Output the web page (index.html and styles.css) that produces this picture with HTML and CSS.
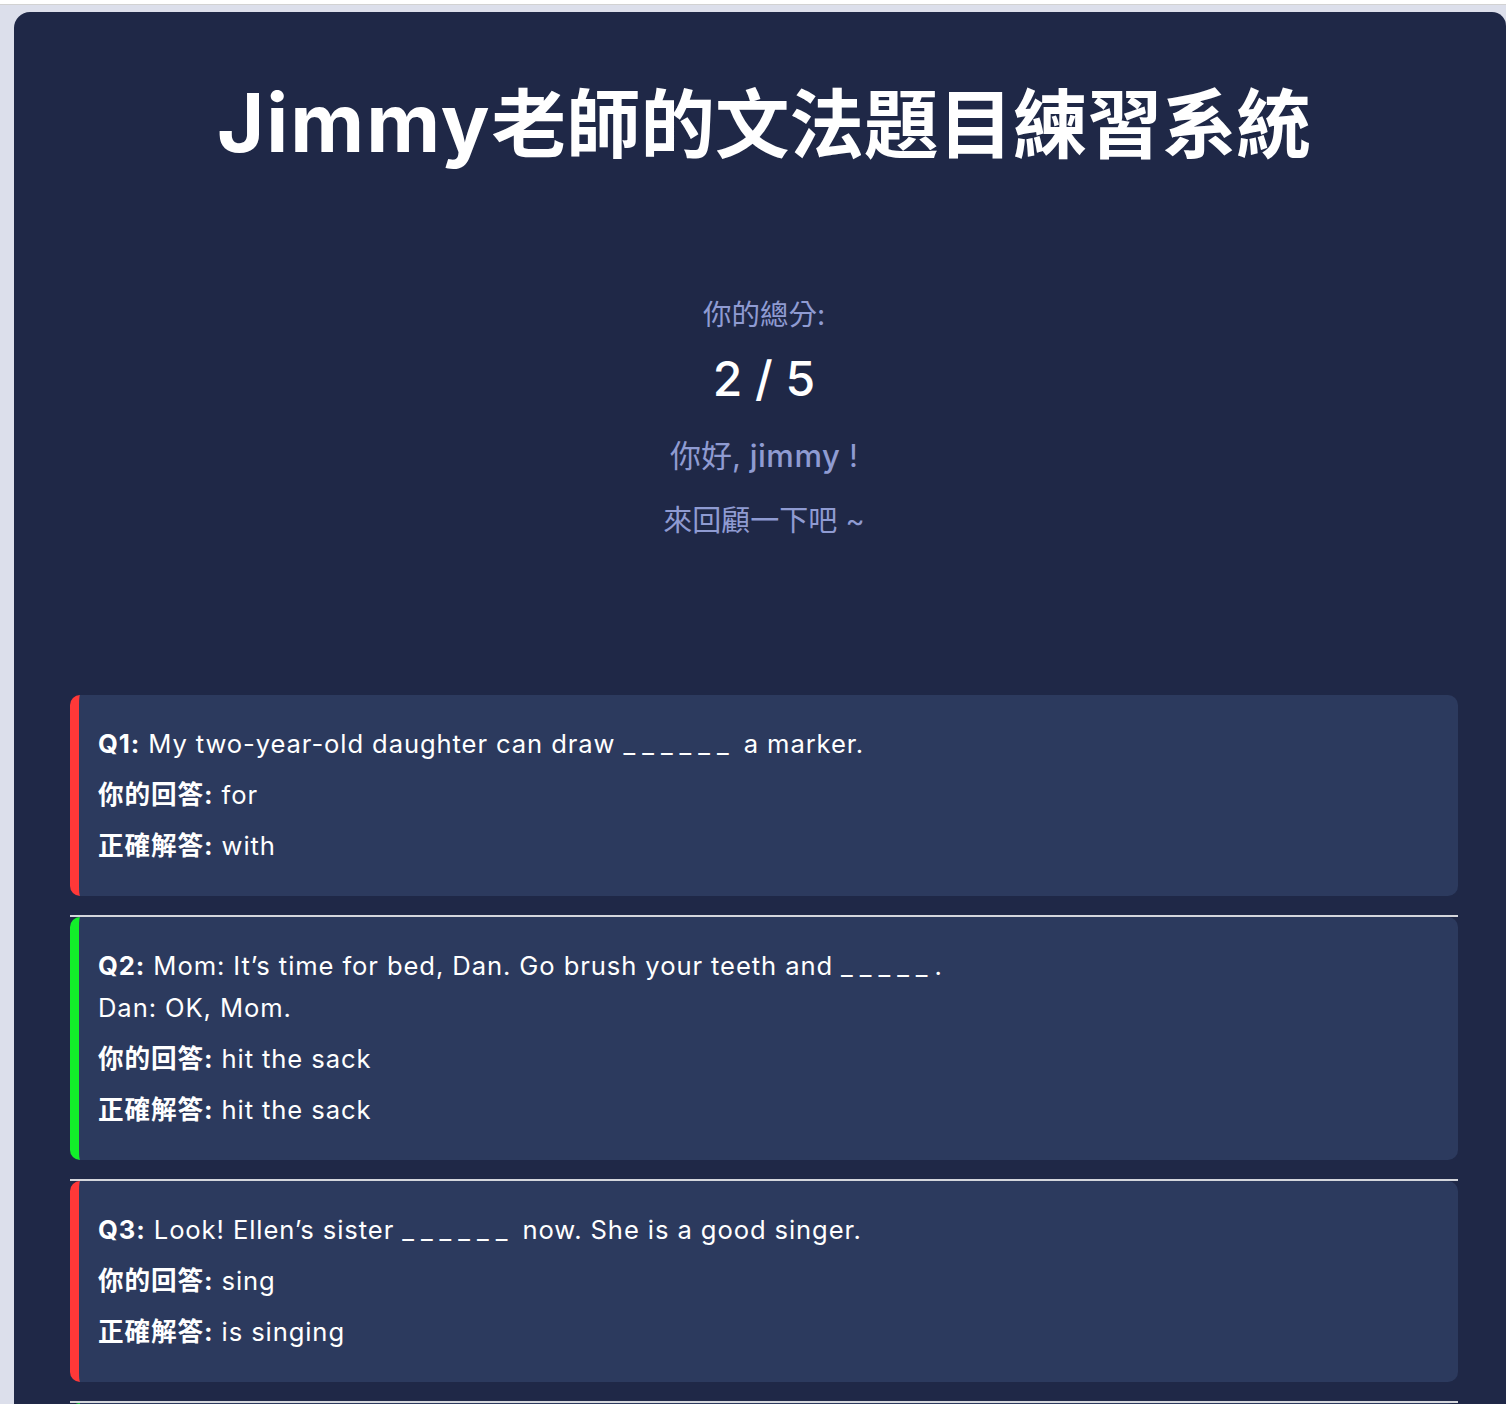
FILE: index.html
```html
<!DOCTYPE html>
<html lang="zh-Hant">
<head>
<meta charset="utf-8">
<title>Jimmy老師的文法題目練習系統</title>
<link rel="stylesheet" href="styles.css">
</head>
<body>
<div class="topbar"></div>
<main class="panel">
  <h1 class="title"><span class="latin">Jimmy</span>老師的文法題目練習系統</h1>
  <section class="summary">
    <p class="score-label">你的總分:</p>
    <p class="score">2 / 5</p>
    <p class="greet">你好, <span class="name">jimmy</span> !</p>
    <p class="review">來回顧一下吧 ~</p>
  </section>
  <section class="results">
    <div class="card wrong">
      <p><b>Q1:</b> My two-year-old daughter can draw <span class="blank">______</span> a marker.</p>
      <p><b>你的回答:</b> for</p>
      <p><b>正確解答:</b> with</p>
    </div>
    <hr class="sep">
    <div class="card right">
      <p><b>Q2:</b> Mom: It’s time for bed, Dan. Go brush your teeth and <span class="blank">_____</span>.<br>Dan: OK, Mom.</p>
      <p><b>你的回答:</b> hit the sack</p>
      <p><b>正確解答:</b> hit the sack</p>
    </div>
    <hr class="sep">
    <div class="card wrong">
      <p><b>Q3:</b> Look! Ellen’s sister <span class="blank">______</span> now. She is a good singer.</p>
      <p><b>你的回答:</b> sing</p>
      <p><b>正確解答:</b> is singing</p>
    </div>
    <hr class="sep">
    <div class="card right">
      <p><b>Q4:</b> Tom <span class="blank">______</span> to school by bus every day.</p>
      <p><b>你的回答:</b> goes</p>
      <p><b>正確解答:</b> goes</p>
    </div>
    <hr class="sep">
    <div class="card wrong">
      <p><b>Q5:</b> There <span class="blank">______</span> some milk in the bottle.</p>
      <p><b>你的回答:</b> are</p>
      <p><b>正確解答:</b> is</p>
    </div>
  </section>
</main>
</body>
</html>
```
FILE: styles.css
```css
html, body {
  margin: 0;
  padding: 0;
}
body {
  background: #dcdfeb;
  font-family: "Inter", "Noto Sans CJK TC", sans-serif;
  overflow-x: hidden;
}
.topbar {
  height: 4px;
  background: #ffffff;
  border-bottom: 1px solid #d2d2d2;
}
.panel {
  margin: 7px 0 0 14px;
  width: 1492px;
  box-sizing: border-box;
  background: #1f2847;
  border-radius: 16px 14px 0 0;
  padding: 68px 48px 40px 56px;
  color: #ffffff;
}
.title {
  margin: 0;
  text-align: center;
  font-size: 74.5px;
  line-height: 90px;
  font-weight: 700;
}
.title .latin {
  font-size: 81px;
  line-height: 0;
  letter-spacing: 2px;
}
.summary {
  text-align: center;
  color: #8f9bd2;
}
.summary p {
  margin: 0;
}
.score-label {
  margin-top: 125px !important;
  font-size: 28.5px;
  line-height: 40px;
}
.score {
  margin-top: 16px !important;
  font-size: 48px;
  line-height: 56px;
  color: #ffffff;
  font-weight: 500;
}
.greet {
  margin-top: 29px !important;
  font-size: 31px;
  line-height: 40px;
}
.name {
  font-weight: 500;
  letter-spacing: 0.5px;
}
.review {
  margin-top: 25px !important;
  font-size: 29px;
  line-height: 40px;
}
.results {
  margin-top: 154px;
}
.card {
  background: #2c3a5e;
  border-radius: 10px;
  border-left: 9px solid #ff3838;
  padding: 19px 20px 20px 19px;
  font-size: 25.6px;
  letter-spacing: 0.9px;
}
.card.right {
  border-left-color: #12ee2a;
}
.card p {
  margin: 9px 0;
  line-height: 42px;
}
.card b {
  font-weight: 700;
}
.blank {
  letter-spacing: 7px;
}
.sep {
  margin: 19px 0 0 0;
  height: 0;
  border: 0;
  border-top: 2px solid #d4d6dc;
}
```
